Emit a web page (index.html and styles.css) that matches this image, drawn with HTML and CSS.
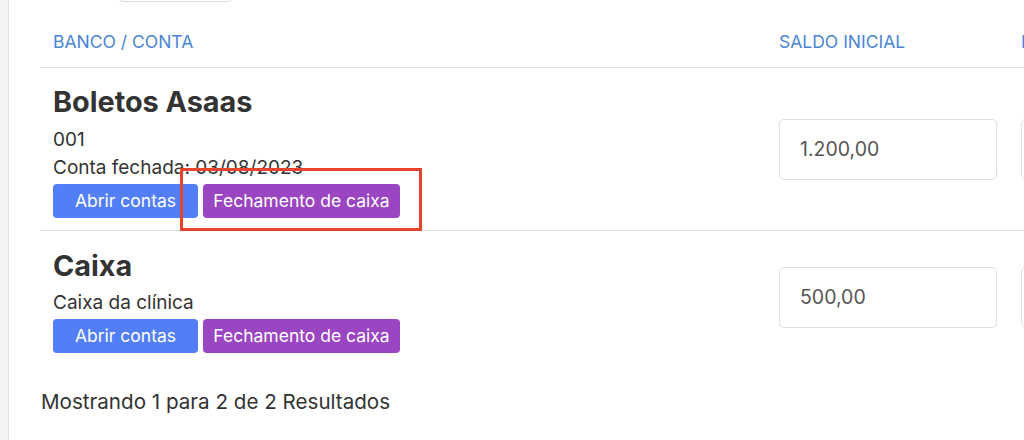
FILE: index.html
```html
<!DOCTYPE html>
<html lang="pt-BR">
<head>
<meta charset="utf-8">
<title>Contas</title>
<link rel="stylesheet" href="styles.css">
</head>
<body>
<div class="page">
  <aside class="sidebar"></aside>
  <main class="content">
    <div class="filter-stub"></div>
    <table class="accounts">
      <colgroup>
        <col class="col-name">
        <col class="col-balance">
        <col class="col-extra">
      </colgroup>
      <thead>
        <tr>
          <th>BANCO / CONTA</th>
          <th>SALDO INICIAL</th>
          <th>DATA</th>
        </tr>
      </thead>
      <tbody>
        <tr class="row-divided">
          <td class="account">
            <div class="account-name">Boletos Asaas</div>
            <div class="account-line">001</div>
            <div class="account-line">Conta fechada: 03/08/2023</div>
            <div class="actions">
              <button class="btn btn-open">Abrir contas</button>
              <button class="btn btn-close">Fechamento de caixa</button>
              <span class="highlight"></span>
            </div>
          </td>
          <td class="money-cell"><div class="money">1.200,00</div></td>
          <td class="money-cell"><div class="money"></div></td>
        </tr>
        <tr>
          <td class="account account-last">
            <div class="account-name">Caixa</div>
            <div class="account-line">Caixa da clínica</div>
            <div class="actions">
              <button class="btn btn-open">Abrir contas</button>
              <button class="btn btn-close">Fechamento de caixa</button>
            </div>
          </td>
          <td class="money-cell"><div class="money">500,00</div></td>
          <td class="money-cell"><div class="money"></div></td>
        </tr>
      </tbody>
    </table>
    <p class="summary">Mostrando 1 para 2 de 2 Resultados</p>
  </main>
</div>
</body>
</html>
```

FILE: styles.css
```css
html, body {
  margin: 0;
  padding: 0;
  background: #ffffff;
  overflow: hidden;
}

body {
  font-family: Inter, Roboto, "Liberation Sans", sans-serif;
  color: #333333;
  width: 1024px;
  height: 440px;
}

.page {
  display: flex;
  height: 440px;
}

.sidebar {
  flex: 0 0 8px;
  background: #f3f3f3;
  border-right: 1px solid #e3e3e3;
}

.content {
  flex: 1;
  min-width: 0;
  padding-left: 31px;
  overflow: hidden;
}

.filter-stub {
  margin: -10px 0 -2px 78px;
  width: 113px;
  height: 10px;
  border: 1px solid #dcdcdc;
  border-radius: 5px;
}

.accounts {
  border-collapse: separate;
  border-spacing: 0;
  table-layout: fixed;
  width: 1168px;
}

.col-name { width: 726px; }
.col-balance { width: 242px; }
.col-extra { width: 200px; }

.accounts th {
  text-align: left;
  font-weight: 400;
  font-size: 17.5px;
  line-height: 20px;
  color: #4a84d4;
  padding: 32px 13px 15px;
  border-bottom: 1px solid #e2e2e2;
  white-space: nowrap;
}

.accounts td {
  vertical-align: middle;
  padding: 0 13px;
}

.row-divided td {
  border-bottom: 1px solid #e2e2e2;
}

.accounts td.account {
  padding: 18px 13px 12px;
}

.accounts td.account-last {
  padding: 19px 13px 11px;
}

.account-name {
  font-size: 28.8px;
  line-height: 32px;
  font-weight: 700;
  color: #333333;
  margin-bottom: 8px;
}

.account-last .account-name {
  margin-bottom: 7px;
}

.account-line {
  font-size: 19px;
  line-height: 28px;
  color: #333333;
}

.actions {
  position: relative;
  display: flex;
  gap: 5px;
  margin-top: 2px;
}

.btn {
  height: 34px;
  border: none;
  border-radius: 4px;
  color: #ffffff;
  font-family: Inter, Roboto, "Liberation Sans", sans-serif;
  font-size: 17.5px;
  line-height: 34px;
  padding: 0;
  cursor: pointer;
}

.btn-open {
  background: #527ff7;
  width: 145px;
}

.btn-close {
  background: #9a45c1;
  width: 197px;
}

.highlight {
  position: absolute;
  left: 127px;
  top: -16px;
  width: 236px;
  height: 57px;
  border: 3px solid #e8432d;
  pointer-events: none;
}

.money {
  width: 196px;
  height: 59px;
  border: 1px solid #dfdfdf;
  border-radius: 5px;
  padding-left: 20px;
  font-size: 19.5px;
  line-height: 59px;
  color: #555555;
}

.summary {
  margin: 26px 0 0 1px;
  font-size: 20.6px;
  line-height: 24px;
  color: #333333;
}
```
